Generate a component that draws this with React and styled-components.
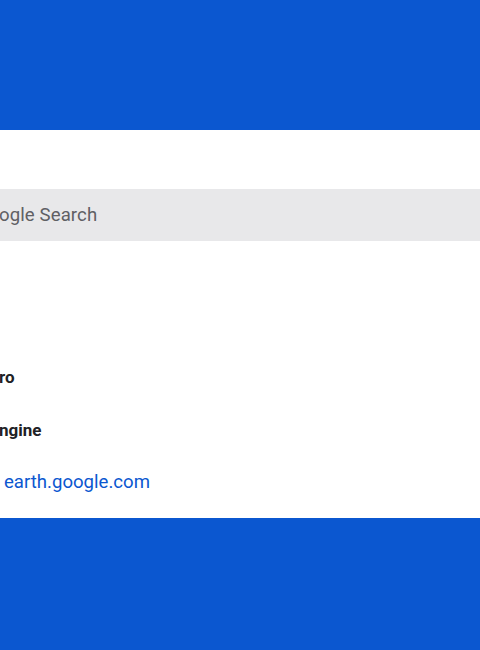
import React from "react";
import styled, { createGlobalStyle } from "styled-components";

const Global = createGlobalStyle`
  html, body { margin: 0; padding: 0; background: #ffffff; }
  body { font-family: Roboto, "Noto Sans", Arial, sans-serif; }
  #root { width: 480px; height: 650px; overflow: hidden; }
`;

const Page = styled.div`
  display: flex;
  flex-direction: column;
  width: 480px;
  height: 650px;
`;

const Band = styled.div`
  background: #0b57d0;
  height: ${(p) => p.$h}px;
  flex: none;
`;

const Main = styled.main`
  flex: none;
  height: 388px;
  background: #ffffff;
  overflow: hidden;
  display: flex;
  flex-direction: column;
  padding-top: 59px;
  box-sizing: border-box;
`;

const SearchBar = styled.div`
  height: 52px;
  background: #e8e8ea;
  display: flex;
  align-items: center;
`;

const SearchText = styled.span`
  font-size: 18.6px;
  color: #5f6064;
  margin-left: -1px;
  letter-spacing: 0.1px;
`;

const List = styled.div`
  display: flex;
  flex-direction: column;
  margin-top: 110px;
`;

const Row = styled.div`
  height: 52.5px;
  display: flex;
  align-items: center;
  margin-left: ${(p) => p.$indent}px;
  font-size: ${(p) => (p.$link ? 18.6 : 17)}px;
  font-weight: ${(p) => (p.$link ? 400 : 700)};
  color: ${(p) => (p.$link ? "#0b57d0" : "#202124")};
`;

export default function App() {
  return (
    <>
      <Global />
      <Page>
        <Band $h={130} />
        <Main>
          <SearchBar>
            <SearchText>ogle Search</SearchText>
          </SearchBar>
          <List>
            <Row $indent={-1}>ro</Row>
            <Row $indent={-1}>ngine</Row>
            <Row $indent={4} $link>earth.google.com</Row>
          </List>
        </Main>
        <Band $h={132} />
      </Page>
    </>
  );
}
